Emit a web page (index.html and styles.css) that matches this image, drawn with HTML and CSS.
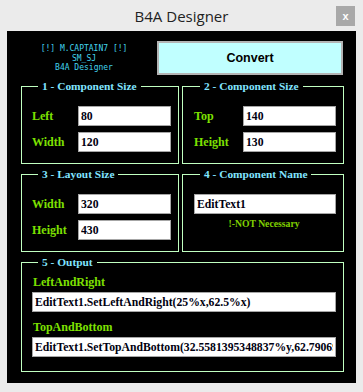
FILE: index.html
```html
<!DOCTYPE html>
<html lang="en">
<head>
    <meta charset="UTF-8">
    <meta name="viewport" content="width=device-width, initial-scale=1.0">
    <title>B4A Designer</title>
    <link rel="stylesheet" href="styles.css">
</head>
<body>
    <div class="window">
        <div class="titlebar">
            <span></span>
            <h1 class="title">B4A Designer</h1>
            <button class="close">x</button>
        </div>
        <div class="panel">
            <div class="header">
                <div class="credits">
                    <div>[!] M.CAPTAIN7 [!]</div>
                    <div>SM_SJ</div>
                    <div>B4A Designer</div>
                </div>
                <button class="convert" onclick="convert()">Convert</button>
            </div>
            <div class="groups">
                <fieldset class="group">
                    <legend>1 - Component Size</legend>
                    <div class="row"><label>Left</label><input id="left" value="80"></div>
                    <div class="row"><label>Width</label><input id="width" value="120"></div>
                </fieldset>
                <fieldset class="group group-right">
                    <legend>2 - Component Size</legend>
                    <div class="row"><label>Top</label><input id="top" value="140"></div>
                    <div class="row"><label>Height</label><input id="height" value="130"></div>
                </fieldset>
                <fieldset class="group">
                    <legend>3 - Layout Size</legend>
                    <div class="row"><label>Width</label><input id="layout-width" value="320"></div>
                    <div class="row"><label>Height</label><input id="layout-height" value="430"></div>
                </fieldset>
                <fieldset class="group group-right">
                    <legend>4 - Component Name</legend>
                    <input class="name" id="name" value="EditText1">
                    <div class="note">!-NOT Necessary</div>
                </fieldset>
                <fieldset class="group output">
                    <legend>5 - Output</legend>
                    <label>LeftAndRight</label>
                    <input class="result" id="lr" value="EditText1.SetLeftAndRight(25%x,62.5%x)">
                    <label class="second">TopAndBottom</label>
                    <input class="result" id="tb" value="EditText1.SetTopAndBottom(32.5581395348837%y,62.7906976744186%y)">
                </fieldset>
            </div>
        </div>
    </div>
    <script>
        function convert() {
            let left = parseFloat(document.getElementById('left').value);
            let width = parseFloat(document.getElementById('width').value);
            let top = parseFloat(document.getElementById('top').value);
            let height = parseFloat(document.getElementById('height').value);
            let lw = parseFloat(document.getElementById('layout-width').value);
            let lh = parseFloat(document.getElementById('layout-height').value);
            let name = document.getElementById('name').value || 'View';

            document.getElementById('lr').value = name + '.SetLeftAndRight(' + (left / lw * 100) + '%x,' + ((left + width) / lw * 100) + '%x)';
            document.getElementById('tb').value = name + '.SetTopAndBottom(' + (top / lh * 100) + '%y,' + ((top + height) / lh * 100) + '%y)';
        }
    </script>
</body>
</html>
```

FILE: styles.css
```css
body {
    margin: 0;
    background-color: #ebebeb;
    font-family: "Liberation Serif", serif;
}

.window {
    width: 363px;
    height: 392px;
}

.titlebar {
    height: 31px;
    display: grid;
    grid-template-columns: 1fr auto 1fr;
    align-items: center;
}

.title {
    margin: 0;
    font-family: "Open Sans", sans-serif;
    font-weight: normal;
    font-size: 15px;
    color: #222;
}

.close {
    justify-self: end;
    margin-right: 8px;
    width: 19px;
    height: 20px;
    padding: 0;
    border: none;
    background-color: #a8a8a8;
    color: white;
    font-family: "Liberation Sans", sans-serif;
    font-weight: bold;
    font-size: 11px;
}

.panel {
    margin-left: 7px;
    width: 349px;
    height: 352px;
    box-sizing: border-box;
    background-color: black;
    padding: 10px 0 0 14px;
}

.header {
    display: grid;
    grid-template-columns: 136px 186px;
    align-items: center;
    height: 34px;
}

.credits {
    text-align: center;
    font-family: "DejaVu Sans Mono", monospace;
    font-size: 8px;
    line-height: 9.5px;
    color: #42d4ee;
    margin-left: -10px;
    margin-top: 1px;
}

.convert {
    height: 34px;
    border: 2px solid #b4b4b4;
    background-color: #c0ffff;
    font-family: "Liberation Sans", sans-serif;
    font-weight: bold;
    font-size: 12.5px;
    color: black;
}

.groups {
    display: grid;
    grid-template-columns: 158px 162px;
    gap: 3px;
    margin-top: 4px;
}

.group {
    margin: 0;
    min-width: 0;
    border: 1px solid #c0ffc0;
    padding: 12px 7px 11px 10px;
}

.group-right {
    padding-left: 11px;
}

legend {
    margin-left: 6px;
    padding: 0 4px;
    font-weight: bold;
    font-size: 11.4px;
    line-height: 15px;
    color: #80e4ff;
}

.row {
    display: flex;
    align-items: center;
    height: 20px;
}

.row + .row {
    margin-top: 6px;
}

label {
    flex: 1;
    font-weight: bold;
    font-size: 12px;
    color: #7ee000;
}

input {
    box-sizing: border-box;
    width: 93px;
    height: 20px;
    margin: 0;
    padding: 0 2px;
    border: 1px solid #a6a6a6;
    background-color: white;
    font-family: "Liberation Serif", serif;
    font-weight: bold;
    font-size: 11.7px;
    color: #000010;
    outline: none;
}

.name {
    display: block;
    width: 142px;
}

.note {
    margin-top: 4px;
    margin-right: 2px;
    text-align: center;
    font-weight: bold;
    font-size: 9.7px;
    line-height: 12px;
    color: #80d000;
}

.output {
    grid-column: 1 / 3;
    padding: 5px 7px 14px 10px;
}

.output label {
    display: block;
    margin-left: 1px;
    margin-bottom: 2px;
    line-height: 15px;
}

.output label.second {
    margin-top: 8px;
}

.result {
    display: block;
    width: 304px;
}
```
